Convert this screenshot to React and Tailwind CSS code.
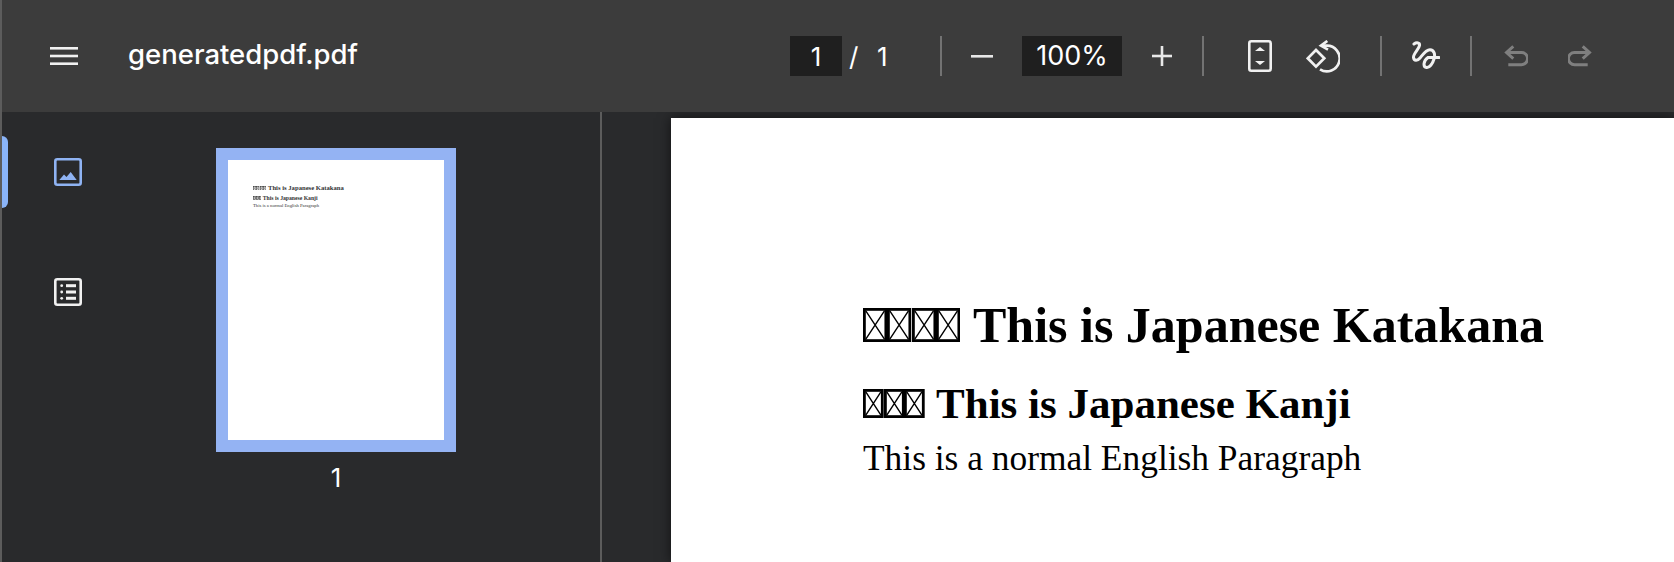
import React from 'react';

const SANS = "font-['Inter','Liberation_Sans',sans-serif]";

function Tofu({ w, h, stroke = 1.6 }) {
  return (
    <svg width={w} height={h} viewBox={`0 0 ${w} ${h}`} className="block" fill="none" stroke="currentColor" strokeWidth={stroke}>
      <rect x={stroke / 2} y={stroke / 2} width={w - stroke} height={h - stroke} />
      <path d={`M${stroke} ${stroke}L${w - stroke} ${h - stroke}M${w - stroke} ${stroke}L${stroke} ${h - stroke}`} strokeWidth={stroke * 0.5} />
    </svg>
  );
}

function TofuRun({ count, w, h, stroke }) {
  return (
    <span className="inline-flex">
      {Array.from({ length: count }).map((_, i) => (
        <Tofu key={i} w={w} h={h} stroke={stroke} />
      ))}
    </span>
  );
}

function Separator({ className = '' }) {
  return <div className={`w-[2px] h-[40px] bg-[#737373] shrink-0 ${className}`} />;
}

function Toolbar() {
  return (
    <header className={`h-[112px] shrink-0 bg-[#3c3c3c] flex items-center text-white ${SANS}`}>
      <div className="w-[788px] shrink-0 flex items-center pl-[48px]">
        <svg width="28" height="18" viewBox="0 0 28 18" fill="#f1f1f1">
          <rect width="28" height="2.6" />
          <rect y="7.7" width="28" height="2.6" />
          <rect y="15.4" width="28" height="2.6" />
        </svg>
        <span className="ml-[50px] text-[27.5px] leading-none font-medium pb-[2px]">generatedpdf.pdf</span>
      </div>

      <div className="w-[52px] h-[40px] bg-[#1f1f1f] flex items-center justify-center text-[26px]">1</div>
      <span className="ml-[7px] text-[26px] w-[28px]">/</span>
      <span className="text-[26px] w-[63px]">1</span>
      <Separator />

      <svg className="ml-[29px]" width="22" height="3" fill="#e8e8e8"><rect width="22" height="2.6" /></svg>
      <div className="ml-[29px] w-[100px] h-[40px] bg-[#1f1f1f] flex items-center justify-center text-[27px]">100%</div>
      <svg className="ml-[30px]" width="20" height="20" viewBox="0 0 20 20" fill="#e8e8e8">
        <rect y="8.7" width="20" height="2.6" />
        <rect x="8.7" width="2.6" height="20" />
      </svg>
      <Separator className="ml-[30px]" />

      {/* fit to page */}
      <svg className="ml-[44px]" width="24" height="32" viewBox="0 0 24 32" fill="none">
        <rect x="1.3" y="1.3" width="21.4" height="29.4" rx="2" stroke="#f1f1f1" strokeWidth="2.6" />
        <path d="M12 7l5 4H7zM12 25l-5-4h10z" fill="#f1f1f1" />
      </svg>
      {/* rotate */}
      <svg className="ml-[34px]" width="34" height="33" viewBox="0 0 34 33" fill="none" stroke="#f1f1f1" strokeWidth="2.7">
        <path d="M10 10L1.800 18.300 10 26.600l8.300-8.300z" />
        <path d="M21.300 1L15 5.700l7 3.900" />
        <path d="M15.500 5.700h5A12.800 12.800 0 1 1 14 29.300" />
      </svg>
      <Separator className="ml-[40px]" />

      {/* draw */}
      <svg className="ml-[30px]" width="28" height="30" viewBox="0 0 28 30" fill="none" stroke="#f1f1f1" strokeWidth="3" strokeLinecap="round">
        <path d="M2 3C4.500 1.200 8 1.500 7.500 4.500 7 8 1 13 1.500 16.500 2 20 5.500 20 8 17 10.500 14 14 8.500 18 8.700 22 9 23.500 13 22 18 20.500 23 17.500 27 14.500 26.500 11 26 11 20 16 16.500H27" />
      </svg>
      <Separator className="ml-[30px]" />

      {/* undo */}
      <svg className="ml-[32px]" width="24" height="24" viewBox="0 0 24 24" fill="none" stroke="#7f7f7f" strokeWidth="3">
        <path d="M9.300 2.300L2.500 8.500l6.800 6.200" />
        <path d="M3 8.500h14.500a6 6 0 0 1 0 12.200H4.300" />
      </svg>
      {/* redo */}
      <svg className="ml-[40px]" width="24" height="24" viewBox="0 0 24 24" fill="none" stroke="#7f7f7f" strokeWidth="3">
        <path d="M14.700 2.300l6.800 6.200-6.800 6.200" />
        <path d="M21 8.500H6.500a6 6 0 0 0 0 12.200h13.200" />
      </svg>
    </header>
  );
}

function Sidebar() {
  return (
    <aside className="w-[600px] shrink-0 bg-[#292a2c] border-r-2 border-[#5c5c5c] flex">
      <nav className="w-[214px] shrink-0 pt-[24px]">
        <div className="h-[72px] flex items-center">
          <div className="w-[6px] h-full bg-[#8ab4f8] rounded-r-[6px]" />
          <svg className="ml-[46px]" width="28" height="28" viewBox="0 0 28 28" fill="none">
            <rect x="1.300" y="1.300" width="25.400" height="25.400" rx="2" stroke="#8fb3f3" strokeWidth="2.600" />
            <path d="M5.300 22L10 16.500l2.500 2.500 4.200-5 6 8z" fill="#8fb3f3" />
          </svg>
        </div>
        <div className="mt-[48px] h-[72px] flex items-center">
          <svg className="ml-[52px]" width="28" height="28" viewBox="0 0 28 28" fill="none">
            <rect x="1.300" y="1.300" width="25.400" height="25.400" rx="2" stroke="#f1f1f1" strokeWidth="2.600" />
            <g fill="#f1f1f1">
              <rect x="12" y="6.200" width="10" height="3" />
              <rect x="12" y="12.500" width="10" height="3" />
              <rect x="12" y="18.800" width="10" height="3" />
              <circle cx="7.700" cy="7.700" r="1.400" />
              <circle cx="7.700" cy="14" r="1.400" />
              <circle cx="7.700" cy="20.300" r="1.400" />
            </g>
          </svg>
        </div>
      </nav>

      <div className="pt-[36px] flex flex-col items-center w-[240px]">
        <div className="w-[240px] h-[304px] border-[12px] border-[#94b3f3] bg-white pl-[25px] pt-[24px] text-[#333] font-['Liberation_Serif',serif]">
          <p className="text-[6.650px] leading-[8px] font-bold whitespace-nowrap">
            <TofuRun count={4} w={3.250} h={4.500} stroke={0.600} />
            <span className="ml-[2px]">This is Japanese Katakana</span>
          </p>
          <p className="mt-[3px] text-[5.700px] leading-[7px] font-bold whitespace-nowrap">
            <TofuRun count={3} w={2.750} h={3.900} stroke={0.600} />
            <span className="ml-[1.500px]">This is Japanese Kanji</span>
          </p>
          <p className="mt-[1px] text-[4.700px] leading-[5px] whitespace-nowrap">This is a normal English Paragraph</p>
        </div>
        <span className={`mt-[11px] text-[26px] leading-[30px] text-white ${SANS}`}>1</span>
      </div>
    </aside>
  );
}

function PdfPage() {
  return (
    <main className="flex-1 min-w-0 bg-[#292a2c] pt-[6px] pl-[69px] overflow-hidden">
      <div className="h-full bg-white shadow-[0_0_12px_rgba(0,0,0,0.6)] pl-[192px] pt-[177px] text-black font-['Liberation_Serif',serif]">
        <h1 className="text-[50px] leading-[60px] font-bold whitespace-nowrap">
          <TofuRun count={4} w={24.250} h={34} stroke={2.800} />
          <span className="ml-[13px]">This is Japanese Katakana</span>
        </h1>
        <h2 className="mt-[23px] text-[43px] leading-[52px] font-bold whitespace-nowrap">
          <TofuRun count={3} w={20.700} h={29} stroke={2.800} />
          <span className="ml-[11px]">This is Japanese Kanji</span>
        </h2>
        <p className="mt-[7px] text-[35.400px] leading-[42px] whitespace-nowrap">This is a normal English Paragraph</p>
      </div>
    </main>
  );
}

export default function App() {
  return (
    <div className="w-[1674px] h-[562px] overflow-hidden flex flex-col border-l-2 border-[#5c5c5c]">
      <Toolbar />
      <div className="flex flex-1 min-h-0">
        <Sidebar />
        <PdfPage />
      </div>
    </div>
  );
}
